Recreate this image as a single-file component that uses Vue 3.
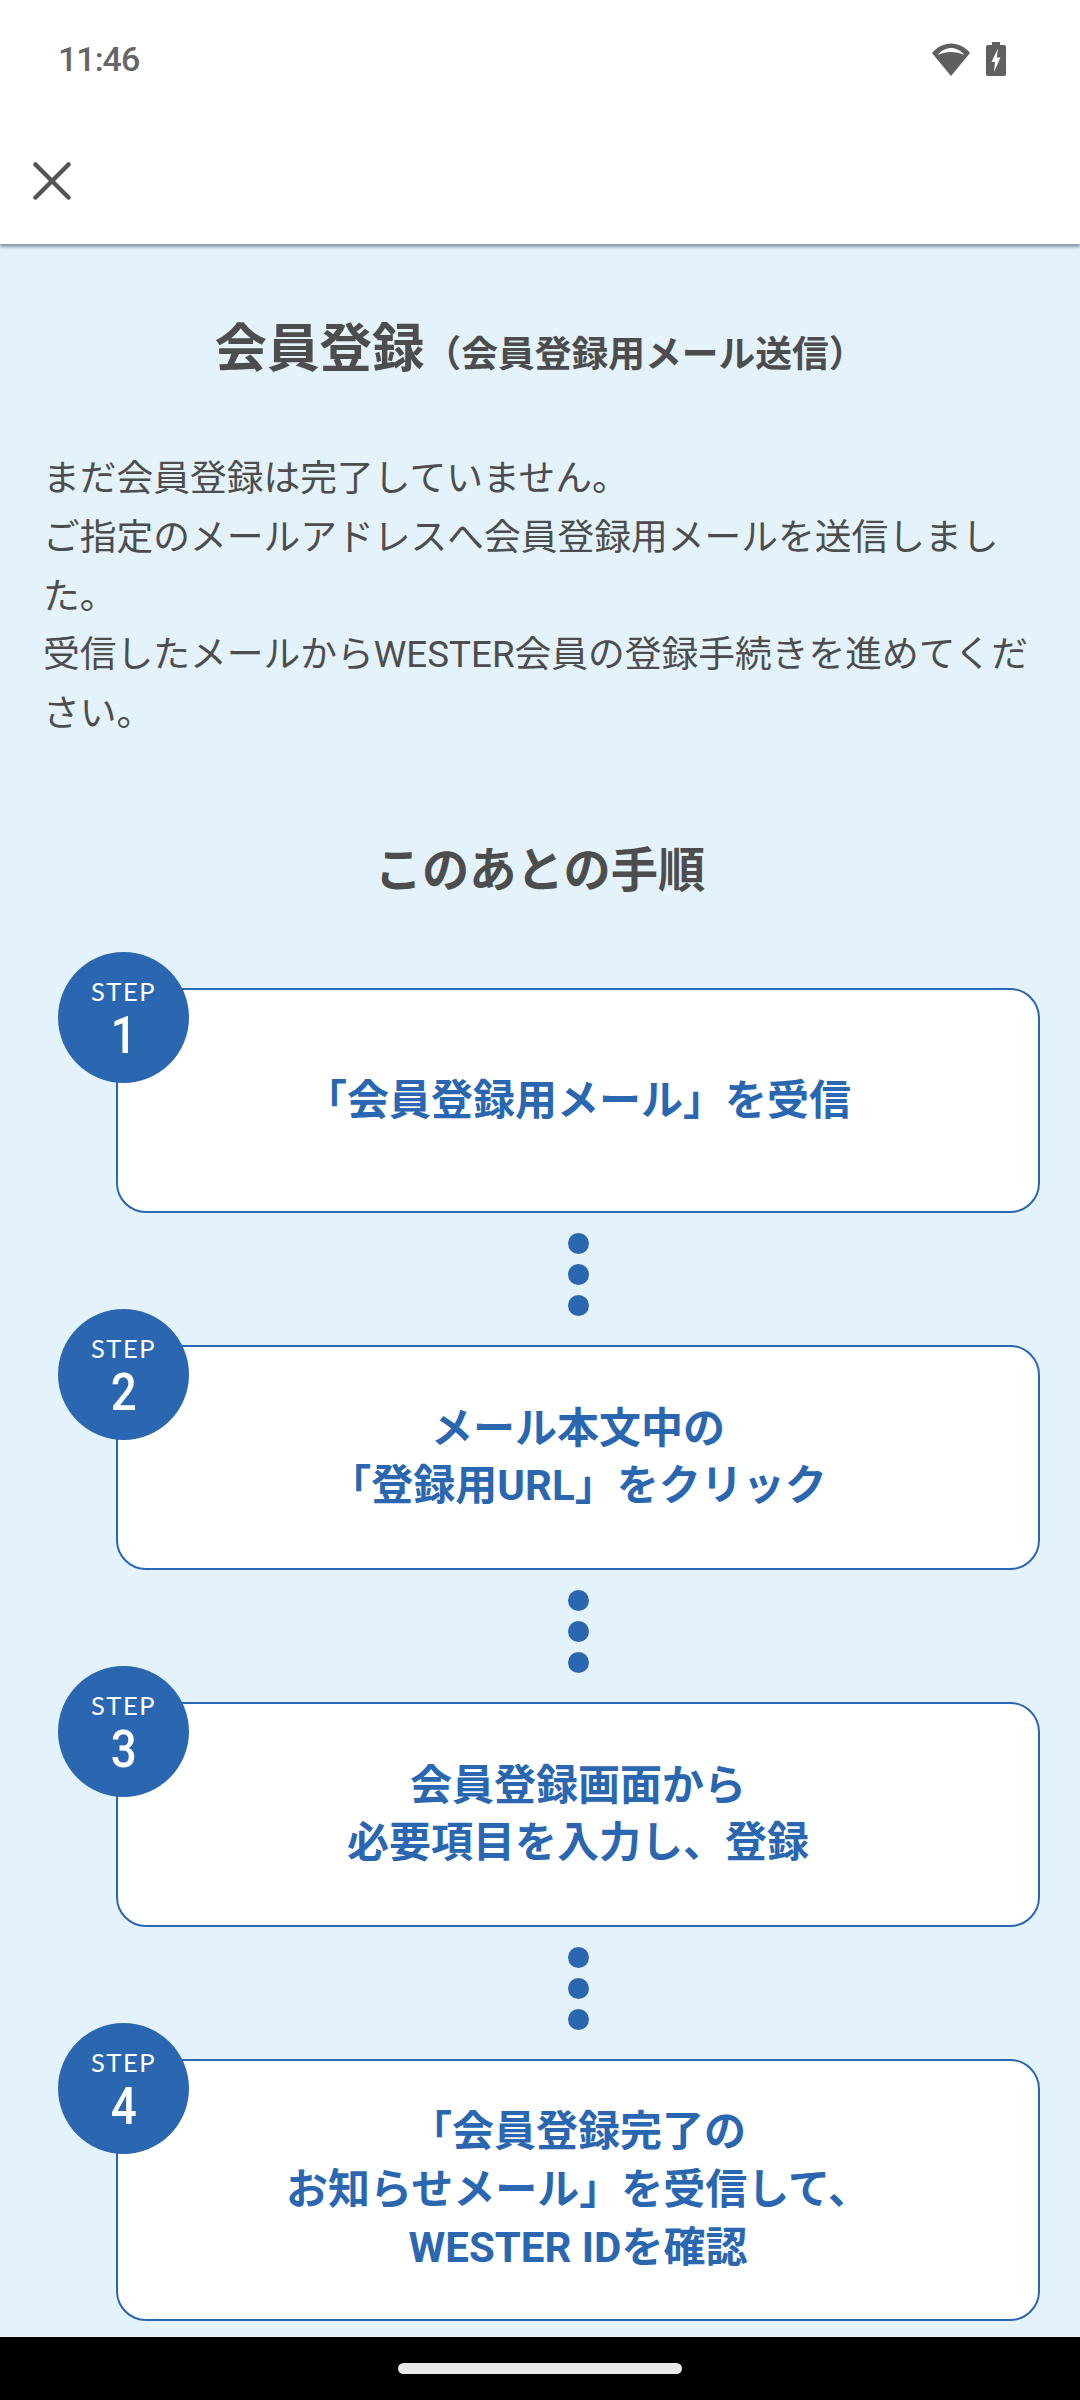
<script setup>
const steps = [
  { n: 1, lines: ['「会員登録用メール」を受信'] },
  { n: 2, lines: ['メール本文中の', '「登録用URL」をクリック'] },
  { n: 3, lines: ['会員登録画面から', '必要項目を入力し、登録'] },
  { n: 4, lines: ['「会員登録完了の', 'お知らせメール」を受信して、', 'WESTER IDを確認'], tall: true }
]
</script>

<template>
  <div class="screen">
    <div class="status">
      <span class="time">11:46</span>
      <div class="status-icons">
        <svg width="38" height="33" viewBox="0 0 38 33">
          <path d="M19 33 L0 10 C5 4 12 0.500 19 0.500 C26 0.500 33 4 38 10 Z" fill="#5f5f5f"/>
          <path d="M5.500 12 C10 7 14.500 5 19 5 C23.500 5 28 7 32.500 12 C28 10 23.500 9 19 9 C14.500 9 10 10 5.500 12 Z" fill="#fff"/>
        </svg>
        <svg width="20" height="34" viewBox="0 0 20 34">
          <path d="M6 0 H14 V3 H18 Q20 3 20 5 V32 Q20 34 18 34 H2 Q0 34 0 32 V5 Q0 3 2 3 H6 Z" fill="#5f5f5f"/>
          <path d="M12 6.500 L5.500 20 H9 L8 30 L14.500 15.500 H10.800 Z" fill="#fff"/>
        </svg>
      </div>
    </div>
    <header class="toolbar">
      <svg class="close" width="38" height="38" viewBox="0 0 38 38">
        <path d="M2.500 2.500 L35.500 35.500 M35.500 2.500 L2.500 35.500" stroke="#555" stroke-width="4.500" stroke-linecap="round" fill="none"/>
      </svg>
    </header>
    <main class="content">
      <h1 class="title">会員登録<small>（会員登録用メール送信）</small></h1>
      <p class="lead">まだ会員登録は完了していません。<br>ご指定のメールアドレスへ会員登録用メールを送信しました。<br>受信したメールからWESTER会員の登録手続きを進めてください。</p>
      <h2 class="sub">このあとの手順</h2>
      <ol class="steps">
        <template v-for="(s, i) in steps" :key="s.n">
          <li class="step" :class="{ tall: s.tall }">
            <div class="badge">
              <span class="badge-label">STEP</span>
              <span class="badge-num">{{ s.n }}</span>
            </div>
            <div class="card">
              <div>
                <div v-for="l in s.lines" :key="l">{{ l }}</div>
              </div>
            </div>
          </li>
          <li v-if="i < steps.length - 1" class="dots"><i></i><i></i><i></i></li>
        </template>
      </ol>
    </main>
    <div class="navbar"><span class="pill"></span></div>
  </div>
</template>

<style>
html, body { margin: 0; padding: 0; background: #e3f2fb; }
</style>

<style scoped>
.screen {
  width: 1080px;
  height: 2400px;
  display: flex;
  flex-direction: column;
  overflow: hidden;
  font-family: Roboto, "Noto Sans CJK JP", sans-serif;
  color: #4d4d4d;
  background: #e3f2fb;
}
.status {
  height: 118px;
  flex: none;
  background: #fff;
  display: flex;
  justify-content: space-between;
  align-items: center;
  padding: 0 71px 0 58px;
  position: relative;
  z-index: 1;
}
.time { font-size: 34px; font-weight: 500; color: #666; letter-spacing: -1px; }
.status-icons { display: flex; align-items: center; gap: 16px; margin-right: 3px; }
.toolbar {
  height: 126px;
  flex: none;
  background: #fff;
  display: flex;
  align-items: center;
  padding-left: 33px;
  box-shadow: 0 3px 3px rgba(60, 80, 100, 0.55);
  position: relative;
}
.close { margin-top: -1px; }
.content { flex: 1; min-height: 0; overflow: hidden; }
.title {
  margin: 0;
  padding-top: 67px;
  font-size: 52.500px;
  line-height: 76px;
  font-weight: 700;
  text-align: center;
}
.title small { font-size: 36.750px; font-weight: 700; }
.lead {
  margin: 57px 46px 0 43px;
  font-size: 36.750px;
  line-height: 58.800px;
}
.sub {
  margin: 94px 0 0;
  font-size: 47.250px;
  line-height: 66px;
  font-weight: 700;
  text-align: center;
}
.steps { list-style: none; margin: 48px 0 0; padding: 0 40px 0 58px; }
.step { position: relative; padding: 36px 0 0 58px; }
.badge {
  position: absolute;
  left: 0;
  top: 0;
  width: 131px;
  height: 131px;
  border-radius: 50%;
  background: #2b67b0;
  color: #fff;
  display: flex;
  flex-direction: column;
  align-items: center;
  font-family: Lato, sans-serif;
}
.badge-label { font-size: 25.500px; line-height: 28px; margin-top: 25px; letter-spacing: 1.500px; }
.badge-num {
  font-family: Roboto, sans-serif;
  font-weight: 500;
  font-size: 52px;
  line-height: 54px;
  margin-top: 4px;
  transform: scaleX(0.88);
}
.card {
  height: 225px;
  box-sizing: border-box;
  border: 2px solid #2b67b0;
  border-radius: 30px;
  background: #fff;
  color: #2b67b0;
  font-size: 42px;
  line-height: 57.750px;
  font-weight: 700;
  text-align: center;
  display: flex;
  align-items: center;
  justify-content: center;
}
.tall .card { height: 262px; }
.dots {
  display: flex;
  flex-direction: column;
  align-items: center;
  gap: 10px;
  padding: 20px 0 0 58px;
  box-sizing: border-box;
  margin-bottom: -36px;
  height: 132px;
}
.dots i { width: 21px; height: 21px; border-radius: 50%; background: #2b67b0; display: block; }
.navbar {
  height: 63px;
  flex: none;
  background: #000;
  display: flex;
  justify-content: center;
  align-items: center;
}
.pill { width: 284px; height: 11px; border-radius: 6px; background: #e8e8e8; }
</style>
